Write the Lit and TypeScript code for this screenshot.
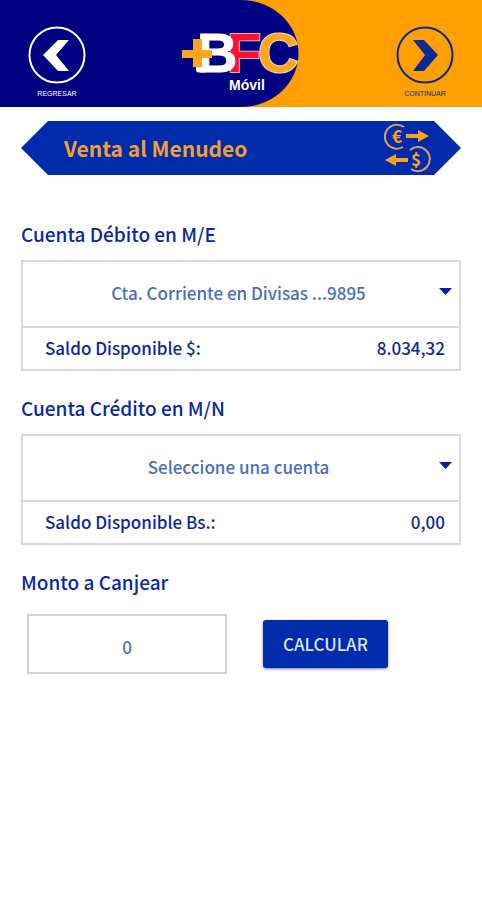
import { LitElement, html, css } from "lit";
import { customElement, property } from "lit/decorators.js";

const base = css`
  * {
    box-sizing: border-box;
  }
  :host {
    display: block;
    font-family: "Noto Sans CJK SC", "Open Sans", sans-serif;
    color: #0a27a4;
  }
`;

@customElement("nav-button")
class NavButton extends LitElement {
  @property() label = "";
  @property({ type: Boolean }) forward = false;

  static styles = [
    base,
    css`
      :host {
        color: inherit;
      }
      .nav {
        display: flex;
        flex-direction: column;
        align-items: center;
        gap: 5px;
        width: 58px;
        padding: 0;
        border: 0;
        background: none;
        color: inherit;
        font: 7px/10px "Liberation Sans", sans-serif;
        cursor: pointer;
      }
      .icon {
        display: block;
        width: 58px;
        height: 58px;
      }
    `,
  ];

  render() {
    return html`
      <button class="nav" type="button">
        <svg class="icon" viewBox="0 0 58 58" aria-hidden="true">
          <circle cx="29" cy="29" r="27.5" fill="none" stroke="currentColor" stroke-width="2" />
          <polygon
            points=${this.forward
              ? "17,14 28,14 42,29 28,45 17,45 29,29"
              : "41,14 30,14 15,29 30,45 41,45 28,29"}
            fill="currentColor"
          />
        </svg>
        <span>${this.label}</span>
      </button>
    `;
  }
}

@customElement("account-box")
class AccountBox extends LitElement {
  @property() heading = "";
  @property() account = "";
  @property() balanceLabel = "";
  @property() balance = "";

  static styles = [
    base,
    css`
      .heading {
        display: block;
        margin-bottom: 13px;
        font-size: 19px;
        line-height: 26px;
        font-weight: 500;
      }
      .box {
        border: 2px solid #d9d9d9;
      }
      .picker {
        position: relative;
        border-bottom: 2px solid #d9d9d9;
      }
      .select {
        display: block;
        width: 100%;
        height: 64px;
        padding: 0 25px 2px 20px;
        border: 0;
        background: #fff;
        appearance: none;
        color: #4a6fc0;
        font: 500 17px/24px "Noto Sans CJK SC", "Open Sans", sans-serif;
        text-align: center;
        text-align-last: center;
      }
      .arrow {
        position: absolute;
        top: 26px;
        right: 7px;
        width: 13px;
        height: 7px;
        pointer-events: none;
      }
      .balance {
        display: flex;
        justify-content: space-between;
        padding: 8px 14px 9px 22px;
        font-size: 17px;
        line-height: 24px;
        font-weight: 500;
      }
    `,
  ];

  render() {
    return html`
      <label class="heading" for="account">${this.heading}</label>
      <div class="box">
        <div class="picker">
          <select class="select" id="account">
            <option>${this.account}</option>
          </select>
          <svg class="arrow" viewBox="0 0 13 7" aria-hidden="true">
            <polygon points="0,0 13,0 6.5,7" fill="#0a1fa0" />
          </svg>
        </div>
        <div class="balance">
          <span>${this.balanceLabel}</span>
          <span>${this.balance}</span>
        </div>
      </div>
    `;
  }
}

@customElement("app-root")
class AppRoot extends LitElement {
  static styles = [
    base,
    css`
      :host {
        min-height: 100vh;
        background: #fff;
      }
      .header {
        display: grid;
        grid-template-columns: 1fr auto 1fr;
        align-items: start;
        height: 107px;
        padding: 26px 28px 0;
        background:
          radial-gradient(58px 54px at 50% 50%, #000083 98%, transparent 100%),
          linear-gradient(90deg, #000083 50%, #ffa000 50%);
      }
      .back {
        color: #fff;
      }
      .next {
        justify-self: end;
        color: #0a2a9c;
      }
      .logo {
        display: block;
        width: 120px;
        height: 70px;
        overflow: visible;
      }
      .wordmark {
        font: 700 56px "Liberation Sans", sans-serif;
      }
      .mobile {
        font: 700 14px "Liberation Sans", sans-serif;
      }
      .content {
        padding: 14px 21px 40px;
      }
      .banner {
        display: flex;
        align-items: center;
        justify-content: space-between;
        height: 54px;
        margin-bottom: 46px;
        padding: 0 30px 0 43px;
        background: #002bab;
        clip-path: polygon(0 50%, 27px 0, calc(100% - 27px) 0, 100% 50%, calc(100% - 27px) 100%, 27px 100%);
      }
      .title {
        margin: 0;
        color: #f0a030;
        font-size: 21px;
        line-height: 30px;
        font-weight: 700;
      }
      .exchange {
        width: 48px;
        height: 50px;
      }
      .coin {
        font: 700 17px "Noto Sans CJK SC", sans-serif;
      }
      .account {
        margin-bottom: 24px;
      }
      .heading {
        display: block;
        margin-bottom: 19px;
        font-size: 19px;
        line-height: 26px;
        font-weight: 500;
      }
      .row {
        display: flex;
        align-items: center;
        gap: 36px;
        padding-left: 6px;
      }
      .amount {
        width: 200px;
        height: 60px;
        padding: 4px 0 0;
        border: 2px solid #d2d2d2;
        color: #4a6fc0;
        font: 500 17px/24px "Noto Sans CJK SC", "Open Sans", sans-serif;
        text-align: center;
      }
      .calculate {
        height: 48px;
        padding: 0 20px;
        border: 0;
        border-radius: 3px;
        background: #002bab;
        box-shadow: 0 1px 3px rgba(0, 0, 60, 0.5);
        color: #dbe6ff;
        font: 500 17px/24px "Noto Sans CJK SC", "Open Sans", sans-serif;
      }
    `,
  ];

  render() {
    return html`
      <header class="header">
        <nav-button class="back" label="REGRESAR"></nav-button>
        <svg class="logo" viewBox="0 0 120 70" role="img" aria-label="+BFC Móvil">
          <text class="wordmark" y="46" paint-order="stroke">
            <tspan x="46" fill="#fb1230" stroke="#ff9fb4" stroke-width="2">F</tspan><tspan x="16" fill="#fff" stroke="#fff" stroke-width="1">B</tspan><tspan x="77" fill="#ffa51f" stroke="#f3d3c4" stroke-width="2">C</tspan>
          </text>
          <path d="M15 39H24V46.500H17Q15 46 15 44Z" fill="#fff" />
          <path d="M1 24H12V13H21V24H31V32H21V41H12V32H1Z" fill="#ffa51f" />
          <text class="mobile" x="48" y="64" fill="#fff">Móvil</text>
        </svg>
        <nav-button class="next" label="CONTINUAR" forward></nav-button>
      </header>
      <main class="content">
        <div class="banner">
          <h1 class="title">Venta al Menudeo</h1>
          <svg class="exchange" viewBox="0 0 48 50" aria-hidden="true">
            <g fill="none" stroke="#d99a6c" stroke-width="2">
              <path d="M21 4A12 12 0 1 0 20 24" />
              <path d="M27 27A12 12 0 1 1 28 46" />
            </g>
            <g fill="#ffa01e">
              <path d="M23 11H35V7L46 13L35 19V15H23Z" />
              <path d="M25 35H13V31L2 37L13 43V39H25Z" />
              <text class="coin" x="9" y="20">€</text>
              <text class="coin" x="28" y="43">$</text>
            </g>
          </svg>
        </div>
        <account-box
          class="account"
          heading="Cuenta Débito en M/E"
          account="Cta. Corriente en Divisas ...9895"
          balanceLabel="Saldo Disponible $:"
          balance="8.034,32"
        ></account-box>
        <account-box
          class="account"
          heading="Cuenta Crédito en M/N"
          account="Seleccione una cuenta"
          balanceLabel="Saldo Disponible Bs.:"
          balance="0,00"
        ></account-box>
        <label class="heading" for="amount">Monto a Canjear</label>
        <div class="row">
          <input class="amount" id="amount" type="text" inputmode="decimal" value="0" />
          <button class="calculate" type="button">CALCULAR</button>
        </div>
      </main>
    `;
  }
}
